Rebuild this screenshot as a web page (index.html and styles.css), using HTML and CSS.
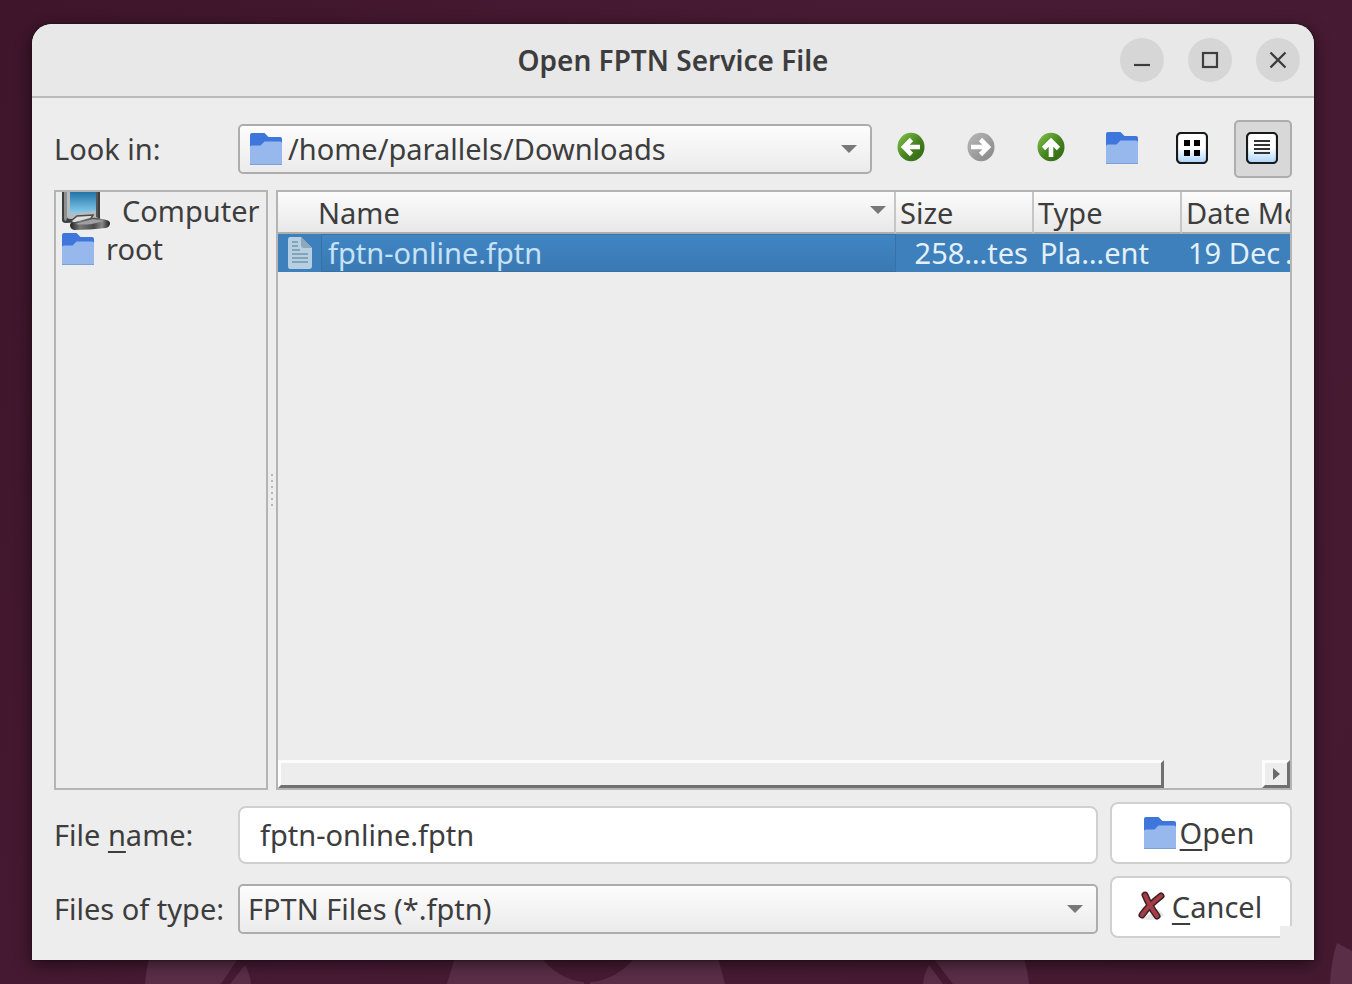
FILE: index.html
```html
<!DOCTYPE html>
<html lang="en">
<head>
<meta charset="utf-8">
<title>Open FPTN Service File</title>
<link rel="stylesheet" href="styles.css">
</head>
<body class="desktop">
<svg width="0" height="0" class="defs" aria-hidden="true">
  <defs>
    <linearGradient id="green" x1="0" y1="0" x2="1" y2="1"><stop offset="0" stop-color="#6fae3c"/><stop offset=".1" stop-color="#7ab944"/><stop offset=".55" stop-color="#44811f"/><stop offset="1" stop-color="#2f6413"/></linearGradient>
    <linearGradient id="grey" x1="0" y1="0" x2="1" y2="1"><stop offset="0" stop-color="#b9b9b9"/><stop offset="1" stop-color="#858585"/></linearGradient>
    <linearGradient id="tile" x1="0" y1="0" x2="0" y2="1"><stop offset=".5" stop-color="#fff"/><stop offset="1" stop-color="#a9d4fb"/></linearGradient>
    <linearGradient id="screen" x1="0" y1="0" x2="0" y2="1"><stop offset="0" stop-color="#2273a8"/><stop offset="1" stop-color="#8cd0f0"/></linearGradient>
    <linearGradient id="base" x1="0" y1="0" x2="1" y2="0"><stop offset="0" stop-color="#222"/><stop offset=".25" stop-color="#777"/><stop offset=".6" stop-color="#4a4a4a"/><stop offset=".8" stop-color="#888"/><stop offset="1" stop-color="#1c1c1c"/></linearGradient>
    <symbol id="folder" viewBox="0 0 32 32">
      <path d="M0 32V2Q0 0 2 0H14.500L18.500 4H30Q32 4 32 6V32Z" fill="#3f76dc"/>
      <path d="M0 32V14Q0 12.500 2 12.500H10.500L14.500 8.500H30Q32 8.500 32 10.500V32Z" fill="#96b8ed"/>
      <path d="M0 31.500H32" stroke="#7d9fd4" stroke-width="1"/>
    </symbol>
    <symbol id="arrow-down" viewBox="0 0 16 8"><path d="M0 0H16L8 8Z" fill="#787878"/></symbol>
  </defs>
</svg>
<svg class="wallpaper" viewBox="0 0 1352 50" aria-hidden="true">
  <g fill="#5a2e47">
    <path d="M145 50Q146 37 150 20H241L221 50Z"/>
    <path d="M230 50L245 31Q250 40 251 50Z"/>
    <path d="M447 50L456 20H717L725 50H590V48Q618 46 638 20H538Q558 46 584 48V50Z"/>
    <path d="M923 50Q924 40 929 31L943 50Z"/>
    <path d="M953 50L933 24H1024Q1028 38 1029 50Z"/>
    <path d="M1330 50Q1331 27 1337 9L1352 17V50Z"/>
  </g>
</svg>

<main class="window">
  <header class="titlebar">
    <h1 class="title">Open FPTN Service File</h1>
    <div class="window-controls">
      <button class="round" aria-label="Minimize"><svg width="20" height="20" viewBox="0 0 20 20"><path d="M2 15H18" stroke="#3d3d3d" stroke-width="2.200"/></svg></button>
      <button class="round" aria-label="Maximize"><svg width="20" height="20" viewBox="0 0 20 20"><rect x="3" y="3" width="14" height="14" fill="none" stroke="#3d3d3d" stroke-width="2.200"/></svg></button>
      <button class="round" aria-label="Close"><svg width="20" height="20" viewBox="0 0 20 20"><path d="M2.500 2.500L17.500 17.500M17.500 2.500L2.500 17.500" stroke="#3d3d3d" stroke-width="2.300"/></svg></button>
    </div>
  </header>

  <form class="content">
    <div class="toolbar">
      <label class="label" for="lookin">Look in:</label>
      <div class="combo">
        <select id="lookin" class="select with-icon"><option>/home/parallels/Downloads</option></select>
        <svg class="combo-icon" width="32" height="32"><use href="#folder"/></svg>
        <svg class="combo-arrow" width="16" height="8"><use href="#arrow-down"/></svg>
      </div>
      <div class="tools">
        <button type="button" class="tool" aria-label="Back"><svg width="32" height="32" viewBox="0 0 32 32"><ellipse cx="15" cy="15" rx="13.500" ry="14.300" fill="url(#green)"/><path d="M24 15H9M15.500 7.500L8 15L15.500 22.500" fill="none" stroke="#fff" stroke-width="4.600"/></svg></button>
        <button type="button" class="tool" aria-label="Forward"><svg width="32" height="32" viewBox="0 0 32 32"><ellipse cx="15" cy="15" rx="13.500" ry="14.300" fill="url(#grey)"/><path d="M5 15H21M14.500 7.500L22 15L14.500 22.500" fill="none" stroke="#fff" stroke-width="4.600"/></svg></button>
        <button type="button" class="tool" aria-label="Parent Directory"><svg width="32" height="32" viewBox="0 0 32 32"><ellipse cx="15" cy="15" rx="13.500" ry="14.300" fill="url(#green)"/><path d="M15 25V9M7.500 16.500L15 9L22.500 16.500" fill="none" stroke="#fff" stroke-width="4.600"/></svg></button>
        <button type="button" class="tool" aria-label="Create New Folder"><svg width="32" height="32"><use href="#folder"/></svg></button>
        <button type="button" class="tool" aria-label="List View"><svg width="32" height="32" viewBox="0 0 32 32"><rect x="1" y="1" width="30" height="30" rx="4" fill="url(#tile)" stroke="#161a1d" stroke-width="2.200"/><path d="M8 8h6v6H8zM18 8h6v6h-6zM8 18h6v6H8zM18 18h6v6h-6z"/></svg></button>
        <button type="button" class="tool pressed" aria-label="Detail View" aria-pressed="true"><svg width="32" height="32" viewBox="0 0 32 32"><rect x="1" y="1" width="30" height="30" rx="4" fill="url(#tile)" stroke="#161a1d" stroke-width="2.200"/><path d="M8 9H24M8 13H24M8 17H24M8 21H24" stroke="#333" stroke-width="2.200"/></svg></button>
      </div>
    </div>

    <div class="panes">
      <nav class="places">
        <a class="place" href="#computer">
          <svg width="48" height="38" viewBox="0 0 48 38">
            <path d="M0 0H38V26Q38 29 35 29L4 31Q0 31 0 28Z" fill="#3c3f40"/>
            <path d="M2 0H6V24L4 29Q2 29 2 26Z" fill="#8d9090"/>
            <path d="M5 0H36V26L8 27Q5 27 5 24Z" fill="#b9bcbb"/>
            <path d="M8 0H34V19L8 22Z" fill="url(#screen)"/>
            <path d="M34 0H36V26L34 25Z" fill="#555"/>
            <path d="M9 29L15 24L31 23L28 28L12 32Z" fill="#dedede" stroke="#4a4a4a" stroke-width="1.500"/>
            <path d="M8 33Q8 30 13 30L28 26Q33 25 40 27Q48 28 48 31Q48 35 44 36Q28 38 12 38Q8 37 8 33Z" fill="url(#base)"/>
            <path d="M13 32L31 27L42 29L30 32Q20 33 13 32Z" fill="#a0a0a0"/>
          </svg>
          <span>Computer</span>
        </a>
        <a class="place" href="#root"><svg width="32" height="32"><use href="#folder"/></svg><span>root</span></a>
      </nav>

      <div class="splitter" role="separator"><i></i><i></i><i></i><i></i><i></i><i></i></div>

      <section class="files">
        <div class="list">
          <table class="table">
            <colgroup><col><col class="col-size"><col class="col-type"><col class="col-date"></colgroup>
            <thead>
              <tr><th class="name-head"><span class="sorted">Name<svg class="sort-arrow" width="16" height="8"><use href="#arrow-down"/></svg></span></th><th>Size</th><th>Type</th><th>Date Modified</th></tr>
            </thead>
            <tbody>
              <tr>
                <td class="name-cell"><div class="file">
                  <svg width="26" height="32" viewBox="0 0 26 32"><path d="M3 0H14L25 11V29Q25 32 22 32H3Q1 32 1 29V3Q1 0 3 0Z" fill="#b6cfe2"/><path d="M14 0L25 11H17Q14 11 14 8Z" fill="#8fa8b9"/><path d="M5 5H11M5 9H11M5 13H13M5 17H21M5 21H21M5 25H21" stroke="#7796ab" stroke-width="1.500"/></svg>
                  <span class="file-name">fptn-online.fptn</span></div></td>
                <td class="size">258…tes</td><td class="type">Pla…ent</td><td class="date">19 Dec&thinsp;…</td>
              </tr>
            </tbody>
          </table>
        </div>
        <div class="scrollbar">
          <div class="thumb"></div>
          <button type="button" class="step" aria-label="Scroll right"><svg width="7" height="12" viewBox="0 0 7 12"><path d="M0 0L7 6L0 12Z" fill="#6a6a6a"/></svg></button>
        </div>
      </section>
    </div>

    <div class="fields">
      <label class="label" for="filename">File <u>n</u>ame:</label>
      <input id="filename" class="text-field" type="text" value="fptn-online.fptn">
      <button type="button" class="action"><svg width="32" height="32"><use href="#folder"/></svg><span><u>O</u>pen</span></button>
      <label class="label" for="filetype">Files of type:</label>
      <div class="combo">
        <select id="filetype" class="select"><option>FPTN Files (*.fptn)</option></select>
        <svg class="combo-arrow" width="16" height="8"><use href="#arrow-down"/></svg>
      </div>
      <button type="button" class="action"><svg width="32" height="32" viewBox="0 0 32 32"><path d="M6 28Q20 31 28 24L22 18Z" fill="#e6e6e6"/><g fill="none" stroke-linecap="round"><path d="M9 4Q13 14 21 25M25 5Q13 14 6 24" stroke="#3a2225" stroke-width="7"/><path d="M9 4Q13 14 21 25M25 5Q13 14 6 24" stroke="#a63c46" stroke-width="4"/></g></svg><span><u>C</u>ancel</span></button>
      <span class="size-grip"></span>
    </div>
  </form>
</main>
</body>
</html>
```

FILE: styles.css
```css
* { box-sizing: border-box; }

.desktop {
  margin: 0;
  min-height: 100vh;
  padding: 24px 38px 24px 32px;
  display: flex;
  position: relative;
  overflow: hidden;
  background: linear-gradient(120deg, #3e152b 0%, #481b34 45%, #451a31 100%);
  color: #3d3d3d;
  font: 29px/38px "Noto Sans", "Open Sans", sans-serif;
}
.desktop svg { display: block; flex: none; }
.desktop .defs { position: absolute; }
.desktop .wallpaper { position: absolute; left: 0; bottom: 0; width: 100%; }

button, input, select { font: inherit; color: inherit; margin: 0; }
button { padding: 0; border: 0; background: none; }
u { text-decoration-thickness: 2px; text-underline-offset: 5px; text-decoration-skip-ink: none; }

.window {
  position: relative;
  flex: 1;
  min-width: 0;
  display: flex;
  flex-direction: column;
  background: #ededed;
  border-radius: 20px 20px 0 0;
  box-shadow: 0 0 2px #1c0a14, 0 4px 16px rgba(0, 0, 0, .55);
}

.titlebar {
  display: grid;
  grid-template-columns: 1fr auto 1fr;
  align-items: center;
  height: 74px;
  padding: 0 14px;
  background: #e8e8e8;
  border-bottom: 2px solid #bababa;
  border-radius: 20px 20px 0 0;
}
.title { grid-column: 2; margin: 0; font-size: 28px; font-weight: 600; }
.window-controls { display: flex; justify-content: flex-end; gap: 24px; }
.round {
  width: 44px;
  height: 44px;
  display: grid;
  place-items: center;
  border-radius: 50%;
  background: #d6d6d6;
}

.content { flex: 1; display: flex; flex-direction: column; gap: 12px; padding: 22px; }

.toolbar { display: grid; grid-template-columns: 184px 1fr auto; align-items: center; }
.label { white-space: nowrap; }
.combo { display: grid; align-items: center; }
.combo > * { grid-area: 1 / 1; }
.select {
  appearance: none;
  width: 100%;
  height: 50px;
  padding: 0 40px 0 8px;
  border: 2px solid #adadad;
  border-radius: 5px;
  background: linear-gradient(#fdfdfd, #ebebeb);
}
.with-icon { padding-left: 48px; }
.combo-icon { margin-left: 12px; pointer-events: none; }
.combo-arrow { justify-self: end; margin-right: 15px; pointer-events: none; }
.tools { display: flex; gap: 12px; padding-left: 12px; }
.tool {
  width: 58px;
  height: 58px;
  display: grid;
  place-items: center;
  padding: 0 2px 2px 0;
  border: 2px solid transparent;
  border-radius: 5px;
}
.pressed { background: #d8d8d8; border-color: #adadad; }

.panes { flex: 1; display: grid; grid-template-columns: 214px 8px 1fr; min-height: 0; }
.places { border: 2px solid #b4b4b4; padding-left: 6px; overflow: hidden; }
.place { display: flex; align-items: center; gap: 12px; height: 38px; color: inherit; text-decoration: none; }
.splitter { display: flex; flex-direction: column; align-items: center; justify-content: center; gap: 4px; }
.splitter i { width: 2px; height: 2px; background: #b8b8b8; }

.files { min-width: 0; display: flex; flex-direction: column; border: 2px solid #b4b4b4; }
.list { flex: 1; overflow: hidden; }
.table { width: calc(100% + 112px); table-layout: fixed; border-collapse: separate; border-spacing: 0; }
.col-size { width: 138px; }
.col-type { width: 148px; }
.col-date { width: 220px; }
.table th {
  height: 42px;
  padding: 2px 4px 0;
  text-align: left;
  font-weight: 400;
  line-height: 38px;
  white-space: nowrap;
  background: linear-gradient(#fcfcfc, #e8e8e8);
  border-right: 2px solid #c6c6c6;
  border-bottom: 2px solid #adadad;
}
.table .name-head { padding-left: 40px; }
.sorted { display: flex; align-items: center; justify-content: space-between; padding-right: 4px; }
.sort-arrow { margin-bottom: 6px; }
.table td { height: 38px; padding: 0; white-space: nowrap; color: #e4f0f9; background: #3d80bc; }
.table .name-cell { padding-left: 9px; }
.file { display: flex; align-items: center; gap: 8px; }
.file-name {
  flex: 1;
  height: 38px;
  padding-left: 6px;
  line-height: 36px;
  background: linear-gradient(#4085c4, #3a79b3);
  border: 1px solid #3771a7;
  color: #c6e2f6;
}
.table .size { padding-right: 6px; text-align: right; }
.table .type { padding-left: 6px; }
.table .date { padding-left: 6px; }

.scrollbar { display: flex; justify-content: space-between; height: 28px; }
.thumb, .step { border: 3px solid; border-color: #fcfcfc #707070 #707070 #fcfcfc; }
.thumb { width: 87.5%; }
.step { width: 28px; display: grid; place-items: center; }

.fields {
  position: relative;
  display: grid;
  grid-template-columns: 184px 1fr 182px;
  align-items: end;
  row-gap: 12px;
}
.fields .label { margin-bottom: 10px; }
.text-field {
  min-width: 0;
  height: 58px;
  padding: 0 20px 2px;
  margin-right: 12px;
  border: 2px solid #d0d0d0;
  border-radius: 8px;
  background: #fff;
}
.fields .combo { margin: 0 12px 4px 0; }
.action {
  height: 62px;
  display: flex;
  align-items: center;
  justify-content: center;
  gap: 4px;
  padding-right: 4px;
  border: 2px solid #d0d0d0;
  border-radius: 8px;
  background: #fff;
}
.size-grip {
  position: absolute;
  right: 0;
  bottom: 0;
  width: 12px;
  height: 12px;
  background: #ededed;
  cursor: nwse-resize;
}
```
